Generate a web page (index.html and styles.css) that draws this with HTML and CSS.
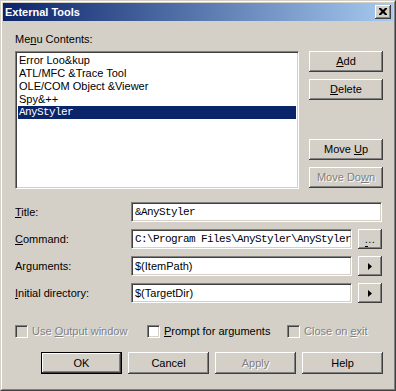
FILE: index.html
```html
<!DOCTYPE html>
<html>
<head>
<meta charset="utf-8">
<link rel="stylesheet" href="styles.css">
</head>
<body>
<div class="window">
  <div class="frame">
    <div class="titlebar">
      <span class="title">External Tools</span>
      <div class="close">
        <svg width="8" height="7" viewBox="0 0 8 7"><path d="M0 0h2l2 2 2-2h2v1l-2.5 2.5L8 6v1H6L4 5 2 7H0V6l2.5-2.5L0 1z" fill="#000"/></svg>
      </div>
    </div>
    <div class="body">
      <div class="lbl">Me<u>n</u>u Contents:</div>
      <div class="top">
        <div class="listbox sunken">
          <div class="item">Error Loo&amp;kup</div>
          <div class="item">ATL/MFC &amp;Trace Tool</div>
          <div class="item">OLE/COM Object &amp;Viewer</div>
          <div class="item">Spy&amp;++</div>
          <div class="item sel">AnyStyler</div>
        </div>
        <div class="side">
          <div class="btn"><span><u>A</u>dd</span></div>
          <div class="btn mt7"><span><u>D</u>elete</span></div>
          <div class="btn mt39"><span>Move <u>U</u>p</span></div>
          <div class="btn mt7 disabled"><span>Move Do<u>w</u>n</span></div>
        </div>
      </div>
      <div class="fields">
        <div class="row">
          <div class="flabel"><u>T</u>itle:</div>
          <div class="input sunken mono">&amp;AnyStyler</div>
        </div>
        <div class="row">
          <div class="flabel"><u>C</u>ommand:</div>
          <div class="input sunken mono">C:\Program Files\AnyStyler\AnyStyler.exe</div>
          <div class="btn small"><span class="dots">...</span></div>
        </div>
        <div class="row">
          <div class="flabel">Ar<u>g</u>uments:</div>
          <div class="input sunken">$(ItemPath)</div>
          <div class="btn small"><svg width="4" height="7" viewBox="0 0 4 7"><path d="M0 0l4 3.5L0 7z" fill="#000"/></svg></div>
        </div>
        <div class="row">
          <div class="flabel"><u>I</u>nitial directory:</div>
          <div class="input sunken">$(TargetDir)</div>
          <div class="btn small"><svg width="4" height="7" viewBox="0 0 4 7"><path d="M0 0l4 3.5L0 7z" fill="#000"/></svg></div>
        </div>
      </div>
      <div class="checks">
        <div class="check disabled"><span class="box sunken grey"></span><span class="ctext">Use <u>O</u>utput window</span></div>
        <div class="check"><span class="box sunken"></span><span class="ctext"><u>P</u>rompt for arguments</span></div>
        <div class="check disabled"><span class="box sunken grey"></span><span class="ctext">Close on <u>e</u>xit</span></div>
      </div>
      <div class="actions">
        <div class="default"><div class="btn wide"><span>OK</span></div></div>
        <div class="btn wide"><span>Cancel</span></div>
        <div class="btn wide disabled"><span>Apply</span></div>
        <div class="btn wide"><span>Help</span></div>
      </div>
    </div>
  </div>
</div>
</body>
</html>
```

FILE: styles.css
```css
html, body {
  margin: 0;
  padding: 0;
  background: #d4d0c8;
}
body {
  font-family: "Liberation Sans", Arial, sans-serif;
  font-size: 11px;
  line-height: 13px;
  color: #000;
}
u { text-decoration: underline; text-underline-offset: 1px; }
.window {
  width: 396px;
  height: 391px;
  box-sizing: border-box;
  border: 1px solid;
  border-color: #d4d0c8 #404040 #404040 #d4d0c8;
  background: #d4d0c8;
}
.frame {
  height: 100%;
  box-sizing: border-box;
  border: 1px solid;
  border-color: #fff #808080 #808080 #fff;
  padding: 1px;
}
.titlebar {
  height: 18px;
  background: linear-gradient(to right, #0a246a 0%, #a6caf0 100%);
  display: flex;
  align-items: center;
  justify-content: space-between;
  padding: 0 2px 0 2px;
}
.title {
  color: #fff;
  font-weight: bold;
  font-size: 11px;
}
.close {
  width: 16px;
  height: 14px;
  box-sizing: border-box;
  background: #d4d0c8;
  box-shadow: inset -1px -1px #404040, inset 1px 1px #fff, inset -2px -2px #808080;
  display: flex;
  align-items: center;
  justify-content: center;
  padding-bottom: 1px;
}
.body {
  padding: 12px 11px 0 12px;
}
.lbl { height: 13px; }
.top {
  display: flex;
  margin-top: 5px;
}
.sunken {
  border: 1px solid;
  border-color: #808080 #fff #fff #808080;
  box-shadow: inset 1px 1px #404040, inset -1px -1px #d4d0c8;
  background: #fff;
  box-sizing: border-box;
}
.listbox {
  width: 284px;
  flex: none;
  height: 138px;
  padding: 2px 2px;
}
.item {
  height: 13px;
  line-height: 13px;
  padding-left: 1px;
  white-space: nowrap;
}
.item.sel {
  background: #0a246a;
  color: #fff;
  font-family: "Liberation Mono", monospace;
  letter-spacing: -0.6px;
}
.side {
  margin-left: 10px;
  display: flex;
  flex-direction: column;
}
.btn {
  width: 74px;
  height: 21px;
  flex: none;
  box-sizing: border-box;
  background: #d4d0c8;
  box-shadow: inset -1px -1px #404040, inset 1px 1px #fff, inset -2px -2px #808080;
  display: flex;
  align-items: center;
  justify-content: center;
}
.mt7 { margin-top: 7px; }
.mt39 { margin-top: 39px; }
.disabled, .disabled .ctext {
  color: #808080;
  text-shadow: 1px 1px 0 #fff;
}
.fields {
  margin-top: 13px;
  display: flex;
  flex-direction: column;
  gap: 7px;
}
.row {
  display: flex;
  align-items: center;
  height: 20px;
}
.flabel {
  width: 116px;
  flex: none;
}
.input {
  flex: 1;
  min-width: 0;
  height: 20px;
  line-height: 18px;
  padding: 0 3px;
  white-space: nowrap;
  overflow: hidden;
}
.mono {
  font-family: "Liberation Mono", monospace;
  letter-spacing: -0.6px;
}
.btn.small {
  width: 24px;
  height: 20px;
  margin-left: 6px;
}
.dots {
  position: relative;
  letter-spacing: 0.5px;
}
.dots::after {
  content: "";
  position: absolute;
  left: 0;
  bottom: -1px;
  width: 3px;
  height: 1px;
  background: #000;
}
.checks {
  margin-top: 22px;
  display: grid;
  grid-template-columns: 132px 140px auto;
  height: 13px;
}
.check {
  display: flex;
  align-items: center;
}
.box {
  width: 13px;
  height: 13px;
  display: inline-block;
  margin-right: 4px;
}
.box.grey { background: #d4d0c8; }
.check.disabled { text-shadow: none; }
.actions {
  margin-top: 14px;
  margin-left: 26px;
  display: flex;
  gap: 6px;
}
.btn.wide {
  width: 81px;
  height: 22px;
}
.default {
  border: 1px solid #000;
  width: 81px;
  height: 22px;
  box-sizing: border-box;
  flex: none;
}
.default .btn.wide {
  width: 79px;
  height: 20px;
}
```
